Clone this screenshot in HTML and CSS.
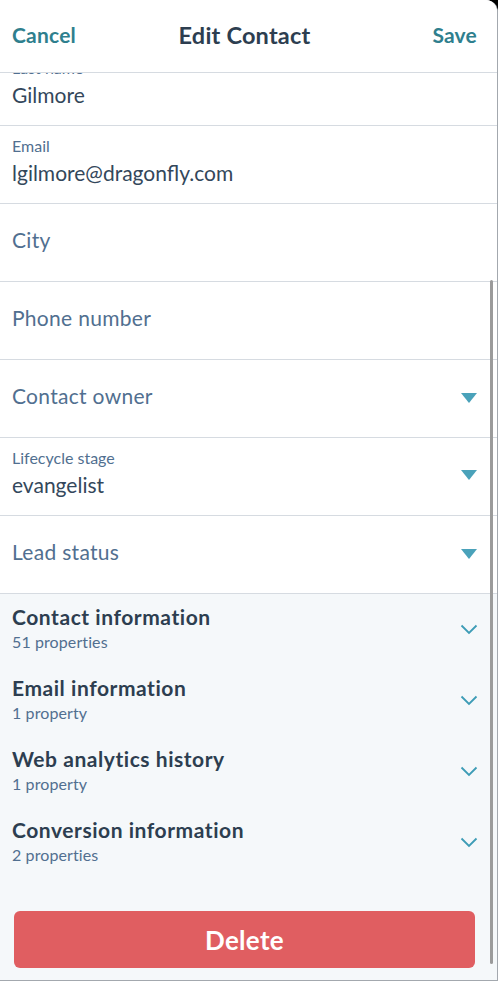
FILE: index.html
```html
<!DOCTYPE html>
<html lang="en">
<head>
<meta charset="utf-8">
<title>Edit Contact</title>
<link rel="stylesheet" href="styles.css">
</head>
<body>
<div class="frame">
  <div class="screen">
    <header class="topbar">
      <span class="nav-btn nav-left">Cancel</span>
      <h1 class="title">Edit Contact</h1>
      <span class="nav-btn nav-right">Save</span>
    </header>
    <main class="content">
      <div class="field field-first">
        <div class="label">Last name</div>
        <div class="value">Gilmore</div>
      </div>
      <div class="field">
        <div class="label">Email</div>
        <div class="value">lgilmore@dragonfly.com</div>
      </div>
      <div class="field field-empty">
        <div class="placeholder">City</div>
      </div>
      <div class="field field-empty">
        <div class="placeholder">Phone number</div>
      </div>
      <div class="field field-empty field-select">
        <div class="placeholder">Contact owner</div>
        <span class="caret"></span>
      </div>
      <div class="field field-select">
        <div class="field-text">
          <div class="label">Lifecycle stage</div>
          <div class="value">evangelist</div>
        </div>
        <span class="caret caret-mid"></span>
      </div>
      <div class="field field-empty field-select">
        <div class="placeholder">Lead status</div>
        <span class="caret"></span>
      </div>
      <section class="groups">
        <div class="group">
          <div class="group-text">
            <div class="group-title">Contact information</div>
            <div class="group-sub">51 properties</div>
          </div>
          <svg class="chevron" viewBox="0 0 18 11" width="18" height="11"><path d="M1.5 1.5 L9 9 L16.5 1.5" fill="none" stroke="#3d9cb6" stroke-width="1.8"/></svg>
        </div>
        <div class="group">
          <div class="group-text">
            <div class="group-title">Email information</div>
            <div class="group-sub">1 property</div>
          </div>
          <svg class="chevron" viewBox="0 0 18 11" width="18" height="11"><path d="M1.5 1.5 L9 9 L16.5 1.5" fill="none" stroke="#3d9cb6" stroke-width="1.8"/></svg>
        </div>
        <div class="group">
          <div class="group-text">
            <div class="group-title">Web analytics history</div>
            <div class="group-sub">1 property</div>
          </div>
          <svg class="chevron" viewBox="0 0 18 11" width="18" height="11"><path d="M1.5 1.5 L9 9 L16.5 1.5" fill="none" stroke="#3d9cb6" stroke-width="1.8"/></svg>
        </div>
        <div class="group">
          <div class="group-text">
            <div class="group-title">Conversion information</div>
            <div class="group-sub">2 properties</div>
          </div>
          <svg class="chevron" viewBox="0 0 18 11" width="18" height="11"><path d="M1.5 1.5 L9 9 L16.5 1.5" fill="none" stroke="#3d9cb6" stroke-width="1.8"/></svg>
        </div>
        <div class="actions">
          <button class="delete-btn" type="button">Delete</button>
        </div>
      </section>
    </main>
    <div class="scrollbar"></div>
  </div>
</div>
</body>
</html>
```

FILE: styles.css
```css
* { box-sizing: border-box; }

html, body {
  margin: 0;
  padding: 0;
  background: #ffffff;
}

body {
  font-family: Lato, "Noto Sans", "Liberation Sans", sans-serif;
  color: #33475b;
  width: 500px;
  height: 983px;
  overflow: hidden;
}

.frame {
  position: relative;
  width: 500px;
  height: 983px;
  background: #ffffff;
}

.frame::before {
  content: "";
  position: absolute;
  top: 0;
  left: 484px;
  width: 14px;
  height: 14px;
  background: #000000;
}

.screen {
  position: relative;
  z-index: 1;
  width: 498px;
  height: 981px;
  background: #ffffff;
  border-right: 1.5px solid #a3a8ae;
  border-bottom: 1.5px solid #a3a8ae;
  border-top-right-radius: 12px;
  display: flex;
  flex-direction: column;
  overflow: hidden;
}

.topbar {
  flex: 0 0 auto;
  height: 73px;
  border-bottom: 1px solid #d6dbe1;
  display: grid;
  grid-template-columns: 1fr auto 1fr;
  align-items: center;
  padding: 0 20px 3px 12px;
  background: #ffffff;
  position: relative;
  z-index: 2;
}

.nav-btn {
  font-size: 21px;
  font-weight: 700;
  color: #2f7f8e;
  letter-spacing: 0.2px;
}

.nav-left { justify-self: start; }
.nav-right { justify-self: end; }

.title {
  margin: 0;
  font-size: 23.5px;
  font-weight: 700;
  color: #2d3e50;
  letter-spacing: 0.2px;
}

.content {
  flex: 1 1 auto;
  display: flex;
  flex-direction: column;
  overflow: hidden;
}

.field {
  flex: 0 0 auto;
  height: 78px;
  border-bottom: 1px solid #d6dbe1;
  padding: 11px 20px 0 12px;
  display: flex;
  flex-direction: column;
}

.field-first {
  margin-top: -25px;
}

.field-empty {
  padding-top: 0;
  padding-bottom: 5px;
  justify-content: center;
}

.field-select {
  flex-direction: row;
  align-items: center;
  justify-content: space-between;
}

.field-select:not(.field-empty) {
  align-items: flex-start;
}

.label {
  font-size: 16px;
  line-height: 18px;
  color: #516f90;
}

.value {
  margin-top: 3px;
  font-size: 21px;
  line-height: 30px;
  color: #33475b;
}

.placeholder {
  font-size: 21px;
  line-height: 30px;
  color: #516f90;
  letter-spacing: 0.3px;
}

.caret {
  width: 0;
  height: 0;
  border-left: 8.5px solid transparent;
  border-right: 8.5px solid transparent;
  border-top: 10px solid #4aa2ba;
  margin-top: 3px;
}

.caret-mid {
  margin-top: 21px;
}

.groups {
  flex: 1 1 auto;
  background: #f5f8fa;
  display: flex;
  flex-direction: column;
}

.group {
  height: 71px;
  padding: 10px 19px 0 12px;
  display: flex;
  align-items: flex-start;
  justify-content: space-between;
}

.group-title {
  font-size: 21px;
  line-height: 26px;
  font-weight: 700;
  color: #2d3e50;
  letter-spacing: 0.55px;
}

.group-sub {
  margin-top: 2px;
  font-size: 16px;
  line-height: 20px;
  color: #516f90;
  letter-spacing: 0.1px;
}

.chevron {
  margin-top: 20px;
}

.actions {
  padding: 33px 22px 0 14px;
}

.delete-btn {
  display: block;
  width: 100%;
  height: 57px;
  border: none;
  border-radius: 6px;
  background: #e05e61;
  color: #ffffff;
  font-family: Lato, "Noto Sans", "Liberation Sans", sans-serif;
  font-size: 26px;
  font-weight: 700;
  letter-spacing: 0.3px;
  padding: 0;
}

.scrollbar {
  position: absolute;
  left: 490px;
  top: 280px;
  width: 3px;
  height: 684px;
  border-radius: 2px;
  background: #9b9b9b;
  z-index: 3;
}
```
